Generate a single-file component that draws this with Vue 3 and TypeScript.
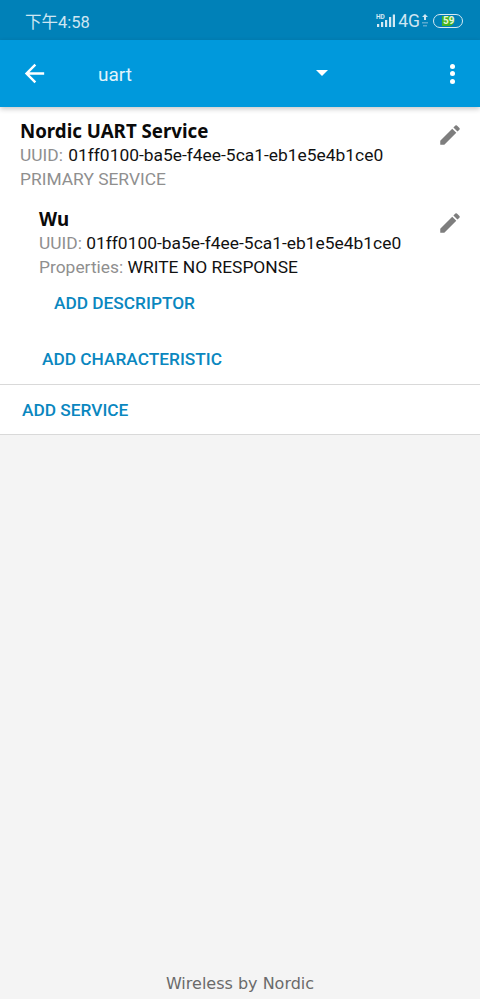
<template>
  <div class="screen">
    <div class="status-bar">
      <span class="time">下午4:58</span>
      <div class="status-icons">
        <svg class="signal" width="20" height="14" viewBox="0 0 20 14">
          <text x="1" y="5" class="hd">HD</text>
          <rect x="2" y="10" width="2.200" height="3" />
          <rect x="6" y="8" width="2.200" height="5" />
          <rect x="10" y="6" width="2.200" height="7" />
          <rect x="14" y="3" width="2.200" height="10" />
          <rect x="17.800" y="0.500" width="2.200" height="12.500" />
        </svg>
        <span class="net">4G</span>
        <svg class="arrows" width="8" height="14" viewBox="0 0 8 14">
          <path d="M4 0 L7 3 H5 V6 H3 V3 H1 Z" fill="#cfe6f2" />
          <path d="M1 8h6v1.500H1zM2 11h4v1.500H2z" fill="#5aa9cf" />
        </svg>
        <div class="battery">
          <div class="battery-fill" :style="{ width: battery + '%' }"></div>
          <span class="battery-label">{{ battery }}</span>
        </div>
      </div>
    </div>

    <header class="toolbar">
      <button class="icon-btn back" aria-label="Back">
        <svg width="29" height="29" viewBox="0 0 24 24">
          <path d="M20 11H7.830l5.590-5.590L12 4l-8 8 8 8 1.410-1.410L7.830 13H20v-2z" fill="#fff" />
        </svg>
      </button>
      <span class="server-name">uart</span>
      <span class="caret"></span>
      <button class="icon-btn more" aria-label="More">
        <span></span><span></span><span></span>
      </button>
    </header>

    <main class="content">
      <div class="panel">
        <section class="service">
          <div class="row">
            <div class="info">
              <div class="title">{{ service.name }}</div>
              <div class="line"><span class="muted label-wide">UUID:</span> {{ service.uuid }}</div>
              <div class="line muted">PRIMARY SERVICE</div>
            </div>
            <svg class="edit" width="26" height="26" viewBox="0 0 24 24">
              <path :d="pencil" />
            </svg>
          </div>

          <div class="characteristic">
            <div class="row">
              <div class="info">
                <div class="title">{{ characteristic.name }}</div>
                <div class="line"><span class="muted">UUID:</span> {{ characteristic.uuid }}</div>
                <div class="line"><span class="muted">Properties:</span> {{ characteristic.properties }}</div>
              </div>
              <svg class="edit" width="26" height="26" viewBox="0 0 24 24">
                <path :d="pencil" />
              </svg>
            </div>
            <a class="action descriptor">ADD DESCRIPTOR</a>
          </div>

          <a class="action characteristic-add">ADD CHARACTERISTIC</a>
        </section>

        <div class="add-service">
          <a class="action">ADD SERVICE</a>
        </div>
      </div>

      <footer class="footer">Wireless by Nordic</footer>
    </main>
  </div>
</template>

<script setup lang="ts">
const battery = 59

const pencil =
  'M3 17.250V21h3.750L17.810 9.940l-3.750-3.750L3 17.250zM20.710 7.040a1 1 0 0 0 0-1.410l-2.340-2.340a1 1 0 0 0-1.410 0l-1.830 1.830 3.750 3.750 1.830-1.830z'

const service = {
  name: 'Nordic UART Service',
  uuid: '01ff0100-ba5e-f4ee-5ca1-eb1e5e4b1ce0'
}

const characteristic = {
  name: 'Wu',
  uuid: '01ff0100-ba5e-f4ee-5ca1-eb1e5e4b1ce0',
  properties: 'WRITE NO RESPONSE'
}
</script>

<style>
html,
body {
  margin: 0;
  background: #f4f4f4;
}
</style>

<style scoped>
.screen {
  width: 480px;
  height: 999px;
  display: flex;
  flex-direction: column;
  overflow: hidden;
  font-family: Roboto, "Noto Sans CJK SC", sans-serif;
  font-size: 16px;
  color: #111;
  background: #f4f4f4;
}

.status-bar {
  height: 40px;
  flex: none;
  display: flex;
  align-items: center;
  justify-content: space-between;
  padding: 2px 17px 0 25px;
  box-sizing: border-box;
  background: #0081b8;
  color: #cfe6f2;
}

.time {
  font-size: 16.500px;
}

.status-icons {
  display: flex;
  align-items: center;
}

.signal {
  fill: #d5e9f3;
}

.hd {
  font-family: Roboto, sans-serif;
  font-size: 6.500px;
  font-weight: 700;
}

.net {
  font-size: 17.500px;
  margin-left: 3px;
  line-height: 14px;
}

.arrows {
  margin-left: 1px;
}

.battery {
  position: relative;
  width: 30px;
  height: 14px;
  box-sizing: border-box;
  margin-left: 4px;
  padding: 1px 0 1px 8px;
  border: 1px solid #d5e9f3;
  border-radius: 7px;
  overflow: hidden;
}

.battery-fill {
  height: 100%;
  background: #43b51f;
  border-radius: 0 5px 5px 0;
}

.battery-label {
  position: absolute;
  left: 9px;
  top: -1px;
  font-size: 10px;
  font-weight: 700;
  line-height: 14px;
  color: #e6f5dc;
}

.toolbar {
  height: 67px;
  flex: none;
  display: flex;
  align-items: center;
  position: relative;
  z-index: 1;
  background: #0099dc;
  box-shadow: 0 2px 5px rgba(0, 0, 0, 0.22);
  color: #fff;
}

.icon-btn {
  border: 0;
  padding: 0;
  background: none;
  display: flex;
}

.back {
  margin-left: 20px;
}

.server-name {
  margin-left: 49px;
  font-size: 19px;
  margin-top: 1px;
  color: #e2f3fb;
}

.caret {
  margin-left: 184px;
  margin-top: -2px;
  border-left: 6.500px solid transparent;
  border-right: 6.500px solid transparent;
  border-top: 6.500px solid #fff;
}

.more {
  margin-left: 122px;
  flex-direction: column;
  gap: 2.500px;
}

.more span {
  width: 5px;
  height: 5px;
  border-radius: 50%;
  background: #fff;
}

.content {
  flex: 1;
  display: flex;
  flex-direction: column;
}

.panel {
  background: #fff;
  border-bottom: 1px solid #d9d9d9;
}

.service {
  padding: 12px 17px 0 20px;
  border-bottom: 1px solid #d9d9d9;
}

.row {
  display: flex;
  justify-content: space-between;
  align-items: flex-start;
}

.title {
  font-family: "Noto Sans", sans-serif;
  font-size: 18.700px;
  font-weight: 700;
  line-height: 24px;
  color: #0a0a0a;
}

.line {
  line-height: 24px;
  font-size: 17.400px;
  white-space: nowrap;
}

.muted {
  color: #8f8f8f;
}

.label-wide {
  margin-right: 1px;
}

.edit {
  fill: #7e7e7e;
  flex: none;
  margin-top: 3px;
}

.characteristic {
  padding-left: 19px;
  margin-top: 16px;
}

.action {
  display: block;
  color: #0a87bf;
  font-weight: 500;
  font-size: 17.300px;
  line-height: 20px;
}

.descriptor {
  margin: 14px 0 0 15px;
}

.characteristic-add {
  margin: 36px 0 0 22px;
  padding-bottom: 15px;
}

.add-service {
  padding: 15px 22px 14px;
}

.footer {
  margin-top: auto;
  padding-bottom: 5px;
  text-align: center;
  font-family: "DejaVu Sans", sans-serif;
  font-size: 16px;
  line-height: 20px;
  color: #6a6a6a;
}
</style>
